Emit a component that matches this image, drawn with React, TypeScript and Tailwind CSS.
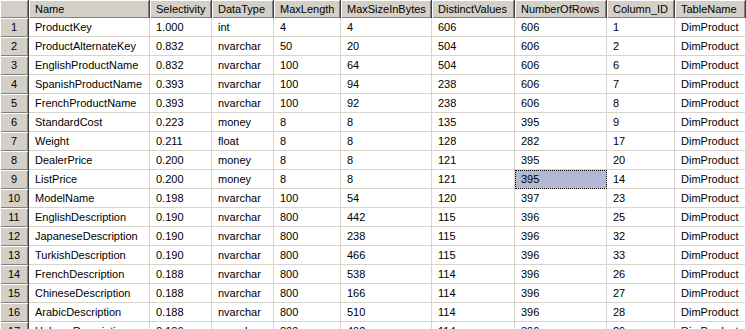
const cols = ['Name', 'Selectivity', 'DataType', 'MaxLength', 'MaxSizeInBytes', 'DistinctValues', 'NumberOfRows', 'Column_ID', 'TableName'];

const rows: string[][] = [
  ['ProductKey', '1.000', 'int', '4', '4', '606', '606', '1'],
  ['ProductAlternateKey', '0.832', 'nvarchar', '50', '20', '504', '606', '2'],
  ['EnglishProductName', '0.832', 'nvarchar', '100', '64', '504', '606', '6'],
  ['SpanishProductName', '0.393', 'nvarchar', '100', '94', '238', '606', '7'],
  ['FrenchProductName', '0.393', 'nvarchar', '100', '92', '238', '606', '8'],
  ['StandardCost', '0.223', 'money', '8', '8', '135', '395', '9'],
  ['Weight', '0.211', 'float', '8', '8', '128', '282', '17'],
  ['DealerPrice', '0.200', 'money', '8', '8', '121', '395', '20'],
  ['ListPrice', '0.200', 'money', '8', '8', '121', '395', '14'],
  ['ModelName', '0.198', 'nvarchar', '100', '54', '120', '397', '23'],
  ['EnglishDescription', '0.190', 'nvarchar', '800', '442', '115', '396', '25'],
  ['JapaneseDescription', '0.190', 'nvarchar', '800', '238', '115', '396', '32'],
  ['TurkishDescription', '0.190', 'nvarchar', '800', '466', '115', '396', '33'],
  ['FrenchDescription', '0.188', 'nvarchar', '800', '538', '114', '396', '26'],
  ['ChineseDescription', '0.188', 'nvarchar', '800', '166', '114', '396', '27'],
  ['ArabicDescription', '0.188', 'nvarchar', '800', '510', '114', '396', '28'],
  ['HebrewDescription', '0.186', 'nvarchar', '800', '492', '114', '396', '29'],
];

const gridCols = 'grid grid-cols-[29px_121px_62px_62px_67px_91px_83px_92px_68px_71px]';
const bevel = 'bg-[#d4d0c8] shadow-[inset_1px_1px_0_#ffffff,inset_-1px_-1px_0_#808080]';

export default function App() {
  return (
    <div className="w-[746px] h-[329px] bg-white overflow-hidden text-[11px] text-black" style={{ fontFamily: '"Liberation Sans", Arial, sans-serif' }}>
      {/* header */}
      <div className={`${gridCols} h-[18px]`}>
        <div className={`${bevel} border-r border-[#404040]`} />
        {cols.map(c => (
          <div key={c} className={`${bevel} flex items-center pl-[6px] border-r border-[#404040] leading-none`}>{c}</div>
        ))}
      </div>

      {/* rows */}
      {rows.map((r, i) => (
        <div key={i} className={`${gridCols} h-[19px]`}>
          <div className={`${bevel} border-r border-[#404040] flex items-center justify-center leading-none`}>{i + 1}</div>
          {[...r, 'DimProduct'].map((v, j) => {
            const sel = i === 8 && j === 6;
            return (
              <div
                key={j}
                className={`flex items-center pl-[6px] border-r border-b border-[#d8d5cd] leading-none whitespace-nowrap overflow-hidden
                  ${sel ? 'bg-[#b3b9d4] outline-1 outline-dotted outline-black -outline-offset-1' : ''}`}
              >
                {v}
              </div>
            );
          })}
        </div>
      ))}
    </div>
  );
}
